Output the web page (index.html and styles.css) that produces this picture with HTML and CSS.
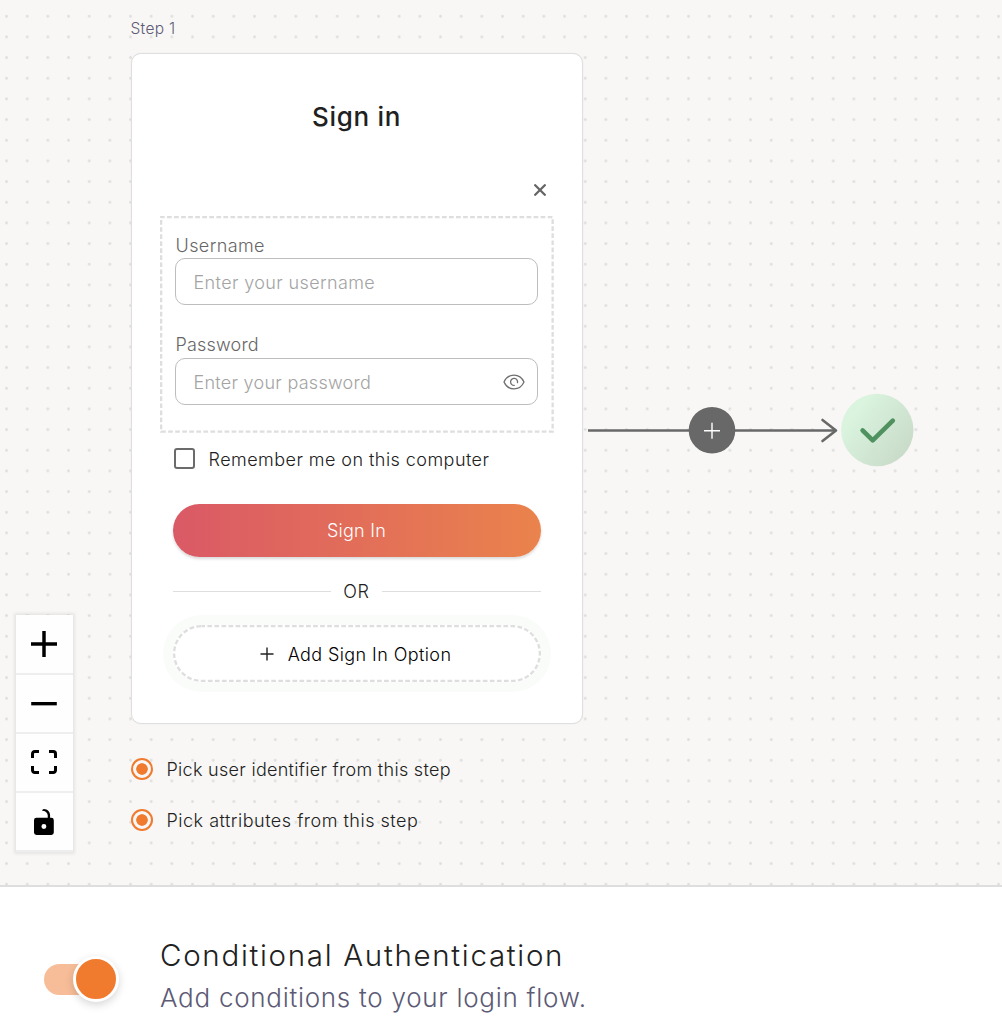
FILE: index.html
```html
<!DOCTYPE html>
<html lang="en">
<head>
<meta charset="utf-8">
<title>Sign-in flow</title>
<link rel="stylesheet" href="styles.css">
</head>
<body>
<main class="canvas">
  <svg class="grid" aria-hidden="true">
    <defs>
      <pattern id="dots" x="-3.8" y="5.95" width="20.667" height="20.667" patternUnits="userSpaceOnUse">
        <circle cx="10.33" cy="10.33" r="1.4" fill="#dededd"/>
      </pattern>
    </defs>
    <rect width="100%" height="100%" fill="url(#dots)"/>
  </svg>

  <section class="step">
    <div class="step-name"><span class="t-step">Step 1</span></div>
    <div class="card">
      <h1 class="title">Sign in</h1>
      <button class="close" aria-label="Remove">
        <svg width="12" height="12" viewBox="0 0 12 12"><path d="M1.2 1.2l9.6 9.6M10.8 1.2l-9.6 9.6" stroke="#666" stroke-width="2.3" fill="none" stroke-linecap="round"/></svg>
      </button>
      <div class="fields">
        <svg class="outline" width="394" height="217"><rect x="1.15" y="1.15" width="391.5" height="214.5"/></svg>
        <label class="label t-user">Username</label>
        <div class="input"><span class="t-puser">Enter your username</span></div>
        <label class="label second t-pass">Password</label>
        <div class="input"><span class="t-ppass">Enter your password</span>
          <svg class="eye" width="22" height="16" viewBox="0 0 22 16" fill="none" stroke="#6f6f6f" stroke-width="1.3" stroke-linecap="round" stroke-linejoin="round"><path d="M1 8C2.6 4.5 6.4 1.1 11 1.1S19.400 4.500 21 8C19.400 11.500 15.600 14.900 11 14.900S2.600 11.500 1 8Z"/><path d="M11.200 11.400A3.500 3.500 0 1 1 14.500 8.600"/></svg>
        </div>
      </div>
      <div class="remember"><i class="box"></i><span class="t-rem">Remember me on this computer</span></div>
      <button class="submit"><span class="t-sub">Sign In</span></button>
      <div class="or"><i></i><span class="t-or">OR</span><i></i></div>
      <button class="add">
        <svg class="outline" width="368" height="57"><rect x="1.150" y="1.150" width="365.700" height="54.700" rx="27.350"/></svg>
        <svg width="14" height="14" viewBox="0 0 14 14"><path d="M7 .5v13M.5 7h13" stroke="#222" stroke-width="1.4"/></svg>
        <span class="t-add">Add Sign In Option</span>
      </button>
    </div>
    <div class="pick"><i class="radio"></i><span class="t-pick1">Pick user identifier from this step</span></div>
    <div class="pick"><i class="radio"></i><span class="t-pick2">Pick attributes from this step</span></div>
  </section>

  <svg class="edge" width="330" height="76" viewBox="0 0 330 76" fill="none">
    <defs><linearGradient id="done" x1="0.1" y1="0.2" x2="0.9" y2="0.8"><stop offset="0.1" stop-color="#d8f4dd"/><stop offset="1" stop-color="#c6dac7"/></linearGradient></defs>
    <path d="M3 38.500H250" stroke="#686868" stroke-width="2.600"/>
    <path d="M237.500 28L251 38.500L237.500 49" stroke="#686868" stroke-width="2.600" stroke-linecap="round" stroke-linejoin="round"/>
    <circle cx="127" cy="38.300" r="23.300" fill="#686868"/>
    <path d="M127 30.800v16M119 38.700h16" stroke="#fff" stroke-width="1.400"/>
    <circle cx="292.300" cy="38" r="36.200" fill="url(#done)" fill-opacity=".94"/>
    <path d="M277.600 38.400L287.700 48.400L307.800 28.600" stroke="#4f925f" stroke-width="4.600" stroke-linecap="round" stroke-linejoin="round"/>
  </svg>

  <nav class="controls">
    <button aria-label="Zoom in"><svg width="26" height="26" viewBox="0 0 32 32"><path d="M32 18.133H18.133V32h-4.266V18.133H0v-4.266h13.867V0h4.266v13.867H32z"/></svg></button>
    <button aria-label="Zoom out"><svg width="26" height="4" viewBox="0 0 32 5"><path d="M0 0h32v4.200H0z"/></svg></button>
    <button aria-label="Fit view"><svg width="26" height="24.400" viewBox="0 0 32 30"><path d="M3.692 4.630c0-.53.4-.938.939-.938h5.215V0H4.708C2.130 0 0 2.054 0 4.630v5.216h3.692V4.631zM27.354 0h-5.200v3.692h5.170c.53 0 .984.400.984.939v5.215H32V4.631A4.624 4.624 0 0 0 27.354 0zm.954 24.830c0 .532-.4.940-.939.940h-5.215v3.768h5.215c2.577 0 4.631-2.130 4.631-4.707v-5.139h-3.692v5.139zm-23.677.940c-.531 0-.939-.4-.939-.940v-5.138H0v5.139c0 2.577 2.130 4.707 4.708 4.707h5.138V25.770H4.631z"/></svg></button>
    <button aria-label="Lock"><svg width="20.300" height="26" viewBox="0 0 25 32"><path d="M21.333 10.667H19.810V7.619C19.810 3.429 16.380 0 12.190 0c-4.114 1.828-1.370 2.133.305 2.438 1.676.305 4.420 2.590 4.420 5.181v3.048H3.047A3.056 3.056 0 0 0 0 13.714v15.238A3.056 3.056 0 0 0 3.048 32h18.285a3.056 3.056 0 0 0 3.048-3.048V13.714a3.056 3.056 0 0 0-3.048-3.047zM12.190 24.533a3.056 3.056 0 0 1-3.047-3.047 3.056 3.056 0 0 1 3.047-3.048 3.056 3.056 0 0 1 3.048 3.048 3.056 3.056 0 0 1-3.048 3.047z"/></svg></button>
  </nav>
</main>
<footer class="conditional">
  <div class="toggle"><i class="knob"></i></div>
  <div class="copy">
    <h2><span class="t-h2">Conditional Authentication</span></h2>
    <p><span class="t-p">Add conditions to your login flow.</span></p>
  </div>
</footer>
</body>
</html>
```
FILE: styles.css
```css
* { box-sizing: border-box; }
body { margin: 0; width: 1002px; height: 1034px; overflow: hidden; background: #fff; color: #212121; font: 300 18px/24px Inter, "Open Sans", sans-serif; }
button { font: inherit; color: inherit; border: 0; padding: 0; background: none; }
h1, h2, p { margin: 0; font-weight: 300; }
span, label { white-space: nowrap; }

.canvas { position: relative; height: 887px; background: #f8f7f5; border-bottom: 2px solid #dedede; overflow: hidden; }
.grid { position: absolute; inset: 0; width: 100%; height: 100%; }

/* Step node */
.step { position: absolute; left: 130.500px; top: 17px; width: 452px; }
.step-name { height: 36px; color: #5c5a75; font-size: 15.5px; }
.card { height: 671px; background: #fff; border: 1px solid #dfdfdf; border-radius: 10px; display: flex; flex-direction: column; box-shadow: 0 0 1px #ddd; }
.title { height: 36px; margin-top: 45px; text-align: center; font-size: 26px; font-weight: 500; line-height: 36px; letter-spacing: 0.7px; }
.close { align-self: flex-end; margin: 49px 36px 0 0; width: 12px; height: 12px; display: flex; }
.fields { position: relative; width: 394px; height: 217px; margin: 20px 0 0 28px; padding: 18px 15.500px 0 15px; display: flex; flex-direction: column; }
.outline { position: absolute; left: 0; top: 0; fill: none; stroke: #dedede; stroke-width: 2.3; stroke-dasharray: 4.7 2.35; stroke-dashoffset: 1.2; }
.label { height: 24px; padding-left: 1px; color: #666; align-self: flex-start; }
.input { height: 47px; padding: 2px 12px 0 18px; border: 1px solid #bdbdbd; border-radius: 10px; display: flex; align-items: center; justify-content: space-between; color: #a3a3a3; }
.eye { margin-top: -2px; }
.second { height: 25px; margin-top: 28px; }
.remember { height: 24px; margin: 15px 0 0 42px; display: flex; align-items: center; gap: 14px; }
.box { width: 21px; height: 21px; border: 2px solid #6b6b6b; border-radius: 3px; margin-top: -3px; }
.submit { width: 368px; height: 53px; margin: 32px 0 0 41px; border-radius: 27px; background: linear-gradient(90deg, #da5966, #ea834c); color: #fff; box-shadow: 0 2px 3px rgba(0,0,0,.15); }
.or { width: 368px; height: 24px; margin: 23px 0 0 41px; display: flex; align-items: center; gap: 12px; }
.or i { flex: 1; height: 1px; margin-top: -2px; background: #dedede; }
.add { position: relative; width: 368px; height: 57px; margin: 21px 0 0 41px; padding-right: 2px; border-radius: 29px; background: #fff; box-shadow: 0 0 0 10px #fafcfa; color: #000; display: flex; align-items: center; justify-content: center; gap: 14px; }
.t-add { padding-top: 2px; }
.pick { height: 24px; margin-top: 33px; display: flex; align-items: center; gap: 14px; }
.pick span { padding-top: 2px; }
.pick + .pick { margin-top: 27px; }
.radio { width: 22px; height: 22px; border: 2px solid #f07a2d; border-radius: 50%; background: radial-gradient(circle, #f07a2d 5.4px, transparent 6.1px); }

/* Tracking per label */
.t-step { letter-spacing: .3px; }
.t-user { letter-spacing: .4px; }
.t-puser { letter-spacing: .37px; }
.t-pass { letter-spacing: .2px; }
.t-ppass { letter-spacing: .27px; }
.t-rem { letter-spacing: .45px; }
.t-sub { letter-spacing: .25px; }
.t-or { letter-spacing: .8px; }
.t-add { letter-spacing: .4px; }
.t-pick1 { letter-spacing: .29px; }
.t-pick2 { letter-spacing: .5px; }
.t-h2 { letter-spacing: 1.7px; }
.t-p { letter-spacing: .72px; }

.edge { position: absolute; left: 585px; top: 392px; }

/* Viewport controls */
.controls { position: absolute; left: 16px; top: 615px; width: 57px; box-shadow: 0 0 3px 2px rgba(0,0,0,.07); }
.controls button { width: 57px; height: 59px; padding-right: 1px; display: flex; align-items: center; justify-content: center; background: #fefefe; border-bottom: 2px solid #eee; }
.controls button:first-child { height: 60px; }

/* Conditional authentication panel */
.conditional { display: flex; padding: 50px 0 0 44px; }
.toggle { width: 73px; height: 31px; margin-top: 27px; border-radius: 16px; background: linear-gradient(90deg, #f7bd98 50px, transparent 50px); display: flex; align-items: center; justify-content: flex-end; }
.knob { width: 46px; height: 46px; margin: -1px -2px 0 0; flex: none; border: 3px solid #fff; border-radius: 50%; background: #f07b2e; box-shadow: 0 3px 8px rgba(0,0,0,.16); }
.copy { margin-left: 43px; }
.copy h2 { height: 36px; font-size: 29.5px; line-height: 36px; }
.copy p { height: 36px; margin-top: 7px; color: #5c5a75; font-size: 26px; line-height: 36px; }
```
